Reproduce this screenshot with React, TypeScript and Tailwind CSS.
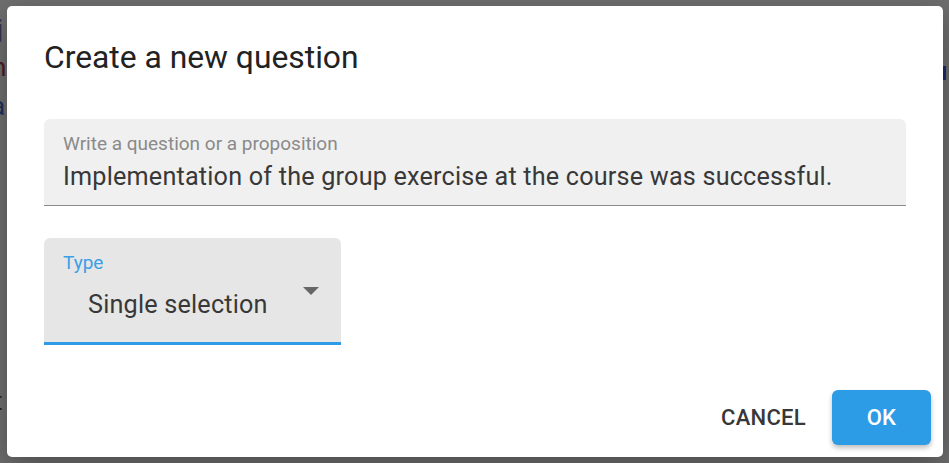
import React from "react";

export default function App() {
  return (
    <div
      className="relative w-[949px] h-[463px] overflow-hidden bg-[#6e6e6e]"
      style={{ fontFamily: "Roboto, 'Liberation Sans', sans-serif" }}
    >
      {/* dimmed page fragments behind the dialog */}
      <span className="absolute left-[-3px] top-[16px] text-[26px] leading-none text-[#3a3050]">j</span>
      <span className="absolute left-[-8px] top-[54px] text-[26px] leading-none text-[#4a1c24]">n</span>
      <span className="absolute left-[-9px] top-[93px] text-[26px] leading-none text-[#1d2f5c]">a</span>
      <span className="absolute left-[-6px] top-[388px] text-[26px] leading-none text-[#2a2430]">t</span>
      <span className="absolute left-[943px] top-[66px] w-[3px] h-[14px] bg-[#1e2a6a]" />

      <div className="absolute left-[7px] top-[6px] w-[936px] h-[451px] rounded-[5px] bg-white shadow-[0_10px_30px_rgba(0,0,0,0.3)] flex flex-col">
        <div className="px-[37px] pt-[27px] pb-[38px]">
          <h2 className="text-[31.8px] leading-[48px] font-normal text-[#222]">
            Create a new question
          </h2>
        </div>
        <div className="px-[37px] flex flex-col">
          <div className="h-[87px] rounded-t-[6px] bg-[#f0f0f0] border-b-[1.5px] border-[#8a8a8a] px-[19px] pt-[13px]">
            <div className="text-[19px] leading-[24px] text-[#8a8a8a]">
              Write a question or a proposition
            </div>
            <div className="pt-[4px] text-[25.2px] leading-[34px] text-[#383838] tracking-[0.2px]">
              Implementation of the group exercise at the course was successful.
            </div>
          </div>
          <div className="mt-[32px] w-[297px] h-[107px] rounded-t-[6px] bg-[#e6e6e6] border-b-[3px] border-[#2d9ce6] px-[19px] pt-[13px] relative">
            <div className="text-[19px] leading-[24px] text-[#3a9fe6]">Type</div>
            <div className="pl-[25px] pt-[13px] text-[25.2px] leading-[34px] text-[#383838] tracking-[0.2px]">
              Single selection
            </div>
            <svg
              className="absolute left-[259px] top-[49px]"
              width="16"
              height="9"
              viewBox="0 0 16 9"
            >
              <path d="M0 0 L16 0 L8 8 Z" fill="#666" />
            </svg>
          </div>
        </div>
        <div className="mt-auto flex items-center justify-end gap-[13px] pr-[12px] pb-[12px]">
          <button className="h-[55px] px-[13px] text-[22px] font-medium tracking-[0.3px] text-[#383838] uppercase">
            Cancel
          </button>
          <button className="w-[99px] h-[55px] rounded-[6px] bg-[#2d9ce6] text-white text-[22px] font-medium tracking-[0.3px] shadow-[0_3px_5px_rgba(0,0,0,0.25)]">
            OK
          </button>
        </div>
      </div>
    </div>
  );
}
